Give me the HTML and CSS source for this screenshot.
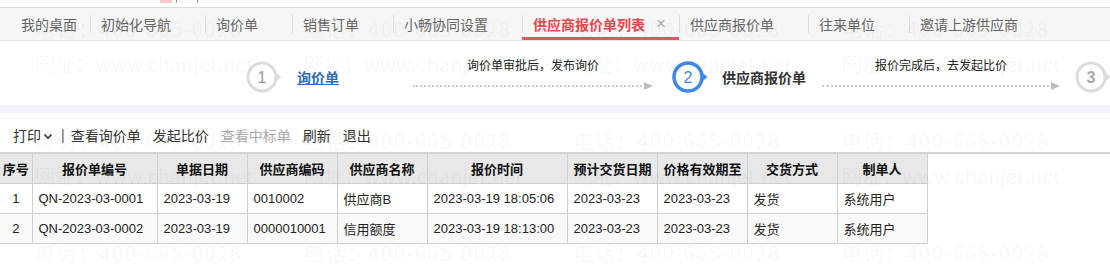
FILE: index.html
```html
<!doctype html>
<html lang="zh-CN">
  <head>
    <meta charset="UTF-8" />
    <title>供应商报价单列表</title>
    <link rel="stylesheet" href="styles.css">
  </head>
  <body>
    <div class="page">
      <div class="topbit"><span class="topbit-mark"></span><span class="topbit-br"></span><span class="topbit-br"></span></div>

      <div class="tabbar">
        <div class="tab first">我的桌面</div>
        <div class="tab">初始化导航<span class="tab-close">×</span></div>
        <div class="tab">询价单<span class="tab-close">×</span></div>
        <div class="tab">销售订单<span class="tab-close">×</span></div>
        <div class="tab">小畅协同设置<span class="tab-close">×</span></div>
        <div class="tab active">供应商报价单列表<span class="tab-close">×</span></div>
        <div class="tab">供应商报价单<span class="tab-close">×</span></div>
        <div class="tab">往来单位<span class="tab-close">×</span></div>
        <div class="tab">邀请上游供应商<span class="tab-close">×</span></div>
      </div>

      <div class="steps">
        <svg class="step-icon" width="40" height="32" viewBox="0 0 40 32">
          <circle cx="16" cy="16" r="14" fill="#fff" stroke="#dcdcdc" stroke-width="3"/>
          <path d="M29.5 11 L35.5 16 L29.5 21 Z" fill="#dcdcdc"/>
          <text x="16" y="21.5" text-anchor="middle" font-size="16" fill="#999">1</text>
        </svg>
        <a class="step-label link">询价单</a>
        <div class="connector first">
          <div class="connector-text">询价单审批后，发布询价</div>
          <div class="connector-line"><span class="dots"></span><span class="arrow"></span></div>
        </div>
        <svg class="step-icon second" width="40" height="32" viewBox="0 0 40 32">
          <circle cx="16" cy="16" r="14" fill="#fff" stroke="#3d88e8" stroke-width="3.5"/>
          <path d="M29.5 11 L35.5 16 L29.5 21 Z" fill="#3d88e8"/>
          <text x="16" y="21.5" text-anchor="middle" font-size="16" fill="#3d88e8">2</text>
        </svg>
        <span class="step-label current">供应商报价单</span>
        <div class="connector second">
          <div class="connector-text">报价完成后，去发起比价</div>
          <div class="connector-line"><span class="dots"></span><span class="arrow"></span></div>
        </div>
        <svg class="step-icon third" width="40" height="32" viewBox="0 0 40 32">
          <circle cx="16" cy="16" r="14" fill="#fff" stroke="#dcdcdc" stroke-width="3"/>
          <path d="M29.5 11 L35.5 16 L29.5 21 Z" fill="#dcdcdc"/>
          <text x="16" y="21.5" text-anchor="middle" font-size="16" font-weight="bold" fill="#aaa">3</text>
        </svg>
      </div>

      <div class="strip"></div>

      <div class="toolbar">
        <span class="tool">打印</span>
        <svg class="chevron" width="10" height="10" viewBox="0 0 10 10"><path d="M1.5 3.5 L5 7 L8.5 3.5" fill="none" stroke="#333" stroke-width="1.6"/></svg>
        <span class="tool-sep">|</span>
        <span class="tool">查看询价单</span>
        <span class="tool">发起比价</span>
        <span class="tool disabled">查看中标单</span>
        <span class="tool">刷新</span>
        <span class="tool">退出</span>
      </div>

      <div class="grid-wrap">
        <table class="grid">
          <colgroup>
            <col class="w-seq"><col class="w-no"><col class="w-90"><col class="w-90"><col class="w-90">
            <col class="w-time"><col class="w-90"><col class="w-90"><col class="w-90"><col class="w-90">
          </colgroup>
          <thead>
            <tr>
              <th>序号</th><th>报价单编号</th><th>单据日期</th><th>供应商编码</th><th>供应商名称</th>
              <th>报价时间</th><th>预计交货日期</th><th>价格有效期至</th><th>交货方式</th><th>制单人</th>
            </tr>
          </thead>
          <tbody>
            <tr>
              <td class="seq">1</td><td>QN-2023-03-0001</td><td>2023-03-19</td><td>0010002</td><td>供应商B</td>
              <td>2023-03-19 18:05:06</td><td>2023-03-23</td><td>2023-03-23</td><td>发货</td><td>系统用户</td>
            </tr>
            <tr class="alt">
              <td class="seq">2</td><td>QN-2023-03-0002</td><td>2023-03-19</td><td>0000010001</td><td>信用额度</td>
              <td>2023-03-19 18:13:00</td><td>2023-03-23</td><td>2023-03-23</td><td>发货</td><td>系统用户</td>
            </tr>
          </tbody>
        </table>
      </div>

      <!-- watermark layer -->
      <div class="watermarks">
        <div class="wm"><span class="wm-tel">电话：400-665-0028</span><span>网址：www.chanjet.net</span></div>
        <div class="wm"><span class="wm-tel">电话：400-665-0028</span><span>网址：www.chanjet.net</span></div>
        <div class="wm"><span class="wm-tel">电话：400-665-0028</span><span>网址：www.chanjet.net</span></div>
        <div class="wm"><span class="wm-tel">电话：400-665-0028</span><span>网址：www.chanjet.net</span></div>
        <div class="wm"><span class="wm-tel">电话：400-665-0028</span><span>网址：www.chanjet.net</span></div>
        <div class="wm"><span class="wm-tel">电话：400-665-0028</span><span>网址：www.chanjet.net</span></div>
        <div class="wm"><span class="wm-tel">电话：400-665-0028</span><span>网址：www.chanjet.net</span></div>
        <div class="wm"><span class="wm-tel">电话：400-665-0028</span><span>网址：www.chanjet.net</span></div>
        <div class="wm"><span class="wm-tel">电话：400-665-0028</span><span>网址：www.chanjet.net</span></div>
        <div class="wm"><span class="wm-tel">电话：400-665-0028</span><span>网址：www.chanjet.net</span></div>
        <div class="wm"><span class="wm-tel">电话：400-665-0028</span><span>网址：www.chanjet.net</span></div>
        <div class="wm"><span class="wm-tel">电话：400-665-0028</span><span>网址：www.chanjet.net</span></div>
      </div>
    </div>
  </body>
</html>
```

FILE: styles.css
```css
* {
  margin: 0;
  padding: 0;
  box-sizing: border-box;
}

body {
  font-family: "Liberation Sans", "Noto Sans CJK SC", sans-serif;
  background: #fff;
  color: #333;
}

.page {
  position: relative;
  width: 1110px;
  height: 270px;
  overflow: hidden;
}

/* cut-off bit above the tabs */
.topbit {
  height: 8px;
  display: flex;
  align-items: flex-start;
  padding-left: 160px;
  border-bottom: 1px solid #dedede;
}

.topbit-mark {
  width: 12px;
  height: 3px;
  background: #f6c9c3;
}

.topbit-br {
  width: 4px;
  height: 3px;
  margin-left: 4px;
  border-left: 1px solid #999;
}

.topbit-br + .topbit-br {
  margin-left: 14px;
  border-left: none;
  border-right: 1px solid #999;
}

.tabbar {
  height: 33px;
  display: flex;
  padding-left: 10px;
  background: #f6f6f6;
  border-bottom: 1px solid #e2e2e2;
}

.tab {
  height: 32px;
  display: flex;
  align-items: center;
  padding: 0 13px 0 11px;
  font-size: 14px;
  color: #666;
  white-space: nowrap;
  background: linear-gradient(#dcdcdc, #dcdcdc) left center / 1px 18px no-repeat;
}

.tab.first {
  padding-left: 11px;
  background: none;
}

.tab-close {
  width: 10px;
  margin-left: 11px;
  font-size: 17px;
  color: #aaa;
  visibility: hidden;
}

.tab.active {
  color: #e5484f;
  font-weight: 700;
  background:
    linear-gradient(#dcdcdc, #dcdcdc) left center / 1px 18px no-repeat,
    linear-gradient(#e8545a, #e8545a) left bottom / 100% 3px no-repeat;
}

.tab.active .tab-close {
  visibility: visible;
  font-weight: 400;
}

/* process steps */
.steps {
  height: 64px;
  display: flex;
  align-items: center;
  padding: 8px 0 0 246px;
}

.step-icon {
  flex: none;
  display: block;
}

.step-icon.second {
  margin-left: 19px;
}

.step-icon.third {
  margin-left: 15px;
}

.step-label {
  font-size: 14px;
  white-space: nowrap;
}

.step-label.link {
  margin-left: 11px;
  color: #2e6bb0;
  font-weight: 700;
  text-decoration: underline;
}

.step-label.current {
  margin-left: 10px;
  color: #333;
  font-weight: 700;
}

.connector {
  flex: none;
  display: flex;
  flex-direction: column;
  margin-top: -2px;
}

.connector.first {
  width: 240px;
  margin-left: 74px;
}

.connector.second {
  width: 238px;
  margin-left: 16px;
}

.connector-text {
  height: 20px;
  line-height: 20px;
  font-size: 12px;
  color: #222;
  text-align: center;
}

.connector-line {
  height: 20px;
  display: flex;
  align-items: center;
}

.dots {
  flex: 1;
  border-top: 2px dotted #c8c8c8;
}

.arrow {
  width: 0;
  height: 0;
  border-top: 4px solid transparent;
  border-bottom: 4px solid transparent;
  border-left: 9px solid #bdbdbd;
  margin-left: 2px;
}

.strip {
  height: 8px;
  background: #f0f4fa;
}

/* toolbar */
.toolbar {
  height: 39px;
  display: flex;
  align-items: center;
  padding: 5px 0 0 13px;
  font-size: 14px;
  color: #333;
}

.tool {
  margin-right: 12px;
}

.chevron {
  margin: 1px 0 0 -10px;
}

.tool-sep {
  margin: 0 6px 0 8px;
  color: #555;
}

.tool.disabled {
  color: #aaa;
}

/* list grid */
.grid-wrap {
  border-top: 2px solid #d3d3d3;
}

.grid {
  border-collapse: collapse;
  table-layout: fixed;
  width: 927px;
  font-size: 13px;
  color: #222;
}

.w-seq { width: 32px; }
.w-no { width: 125px; }
.w-90 { width: 90px; }
.w-time { width: 140px; }

.grid th,
.grid td {
  height: 30px;
  border: 1px solid #cfcfcf;
  padding: 0 6px;
  white-space: nowrap;
  overflow: hidden;
  text-align: left;
}

.grid thead th {
  height: 29px;
  border-top: none;
  background: #e8e8e8;
  font-weight: 700;
  text-align: center;
  color: #111;
}

.grid th:first-child,
.grid td:first-child {
  border-left: none;
  padding: 0 2px;
}

.grid td.seq {
  text-align: center;
}

.grid tr.alt td {
  background: #f9f9f9;
}

/* faint watermark over the page */
.watermarks {
  position: absolute;
  inset: 0;
  pointer-events: none;
  display: grid;
  grid-template-columns: repeat(4, 269px);
  grid-auto-rows: 112px;
  padding: 11px 0 0 35px;
  color: rgba(0, 0, 0, 0.045);
  font-family: "Noto Sans CJK SC", sans-serif;
  font-size: 20px;
}

.wm {
  display: flex;
  flex-direction: column;
  line-height: 35px;
  white-space: nowrap;
}

.wm-tel {
  letter-spacing: 1.5px;
}
```
